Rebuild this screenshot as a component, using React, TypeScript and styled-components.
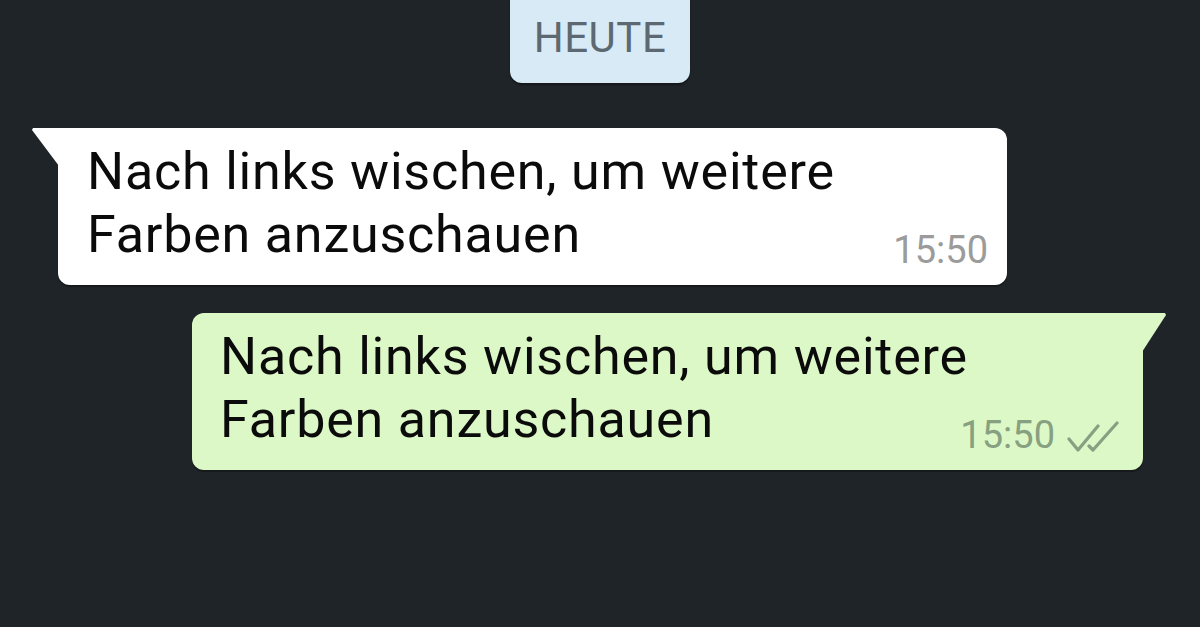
import styled, { createGlobalStyle, css } from 'styled-components'

const GlobalStyle = createGlobalStyle`
	html, body {
		margin: 0;
		padding: 0;
		background: #1f2428;
	}

	body {
		font-family: Roboto, "Noto Sans", "Liberation Sans", sans-serif;
		-webkit-font-smoothing: antialiased;
	}
`

type Side = 'in' | 'out'

interface bubbleProps {
	side: Side;
	time: string;
	children: React.ReactNode;
}

const DoubleCheck = () => (
	<svg width='52' height='34' viewBox='0 0 52 34' fill='none'>
		<path
			d='M2 19 L11 30 L31 6'
			stroke='#86a081'
			strokeWidth='3.2'
			strokeLinecap='round'
			strokeLinejoin='round'
		/>
		<path
			d='M22 26 L26 30 L50 3'
			stroke='#86a081'
			strokeWidth='3.2'
			strokeLinecap='round'
			strokeLinejoin='round'
		/>
	</svg>
)

const Bubble = ({ side, time, children }: bubbleProps) => {
	return (
		<Row side={side}>
			<Body side={side}>
				<Text>{children}</Text>
				<Meta>
					<Time side={side}>{time}</Time>
					{side === 'out' && <DoubleCheck />}
				</Meta>
			</Body>
		</Row>
	)
}

export default function App() {
	return (
		<>
			<GlobalStyle />
			<Screen>
				<DateBadge>HEUTE</DateBadge>
				<Messages>
					<Bubble side='in' time='15:50'>
						Nach links wischen, um weitere<br />Farben anzuschauen
					</Bubble>
					<Bubble side='out' time='15:50'>
						Nach links wischen, um weitere<br />Farben anzuschauen
					</Bubble>
				</Messages>
			</Screen>
		</>
	)
}

const Screen = styled.div`
	display: flex;
	flex-direction: column;
	align-items: center;

	width: 1200px;
	height: 627px;
	overflow: hidden;

	background: #1f2428;
`

const DateBadge = styled.div`
	display: flex;
	align-items: center;
	justify-content: center;

	width: 180px;
	height: 95px;
	margin-top: -12px;
	padding-top: 3px;
	box-sizing: border-box;

	background: #d8eaf5;
	border-radius: 12px;
	box-shadow: 0 2px 2px rgba(0, 0, 0, 0.35);

	color: #5d6972;
	font-size: 42px;
	letter-spacing: 0.5px;
`

const Messages = styled.div`
	display: flex;
	flex-direction: column;
	gap: 28px;

	width: 100%;
	margin-top: 45px;
`

const Row = styled.div<{ side: Side }>`
	display: flex;
	justify-content: ${p => (p.side === 'in' ? 'flex-start' : 'flex-end')};
	padding: ${p => (p.side === 'in' ? '0 0 0 58px' : '0 57px 0 0')};
`

const Body = styled.div<{ side: Side }>`
	position: relative;
	display: flex;
	align-items: flex-end;
	justify-content: space-between;

	width: ${p => (p.side === 'in' ? '949px' : '951px')};
	box-sizing: border-box;
	padding: 12px 0 16px 28px;

	background: ${p => (p.side === 'in' ? '#ffffff' : '#dcf8c6')};
	border-radius: 12px;
	box-shadow: 0 2px 1px rgba(0, 0, 0, 0.3);

	${p =>
		p.side === 'in'
			? css`
					padding-left: 29px;
					padding-right: 19px;
					border-top-left-radius: 0;

					&::before {
						content: '';
						position: absolute;
						top: 0;
						left: -26px;
						width: 27px;
						height: 38px;
						background: #ffffff;
						clip-path: polygon(0 2px, 1px 0, 100% 0, 100% 100%);
					}
				`
			: css`
					padding-right: 24px;
					border-top-right-radius: 0;

					&::before {
						content: '';
						position: absolute;
						top: 0;
						right: -23px;
						width: 24px;
						height: 39px;
						background: #dcf8c6;
						clip-path: polygon(0 0, calc(100% - 1px) 0, 100% 2px, 0 100%);
					}
				`}
`

const Text = styled.div`
	flex: 1;
	min-width: 0;
	margin-bottom: 3px;

	color: #0b0b0b;
	font-size: 52px;
	line-height: 63px;
	letter-spacing: 0.8px;
	white-space: nowrap;
`

const Meta = styled.div`
	display: flex;
	flex-shrink: 0;
	align-items: flex-end;
	gap: 12px;
`

const Time = styled.span<{ side: Side }>`
	color: ${p => (p.side === 'in' ? '#9b9b9b' : '#87a081')};
	font-size: 38px;
	line-height: 1;
`
